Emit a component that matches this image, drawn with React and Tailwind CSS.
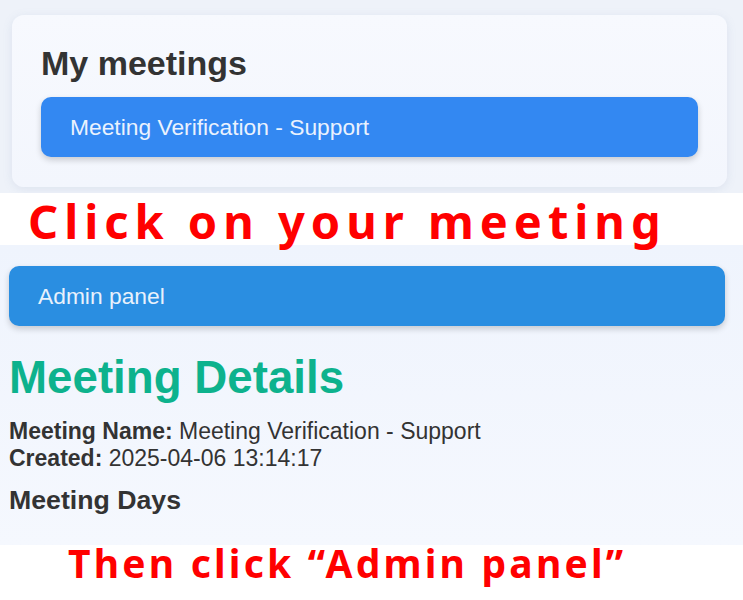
export default function App() {
  return (
    <div
      className="w-[743px] h-[600px] overflow-hidden bg-white text-[#333]"
      style={{ fontFamily: '"Liberation Sans", Arial, sans-serif' }}
    >
      {/* My meetings */}
      <div className="h-[193px] bg-[#eef2f9] pt-[15px] px-[12px] pr-[16px]">
        <div className="rounded-[12px] bg-gradient-to-b from-[#f7f9fe] to-[#f3f6fd] shadow-[0_2px_10px_rgba(120,140,180,0.15)] px-[29px] pt-[28px] pb-[30px]">
          <h2 className="text-[34px] leading-[40px] font-bold text-[#333]">My meetings</h2>
          <button className="mt-[14px] w-full h-[60px] rounded-[10px] bg-[#3388f2] text-left px-[29px] text-[22.8px] text-[#eaf2fe] shadow-[0_3px_6px_rgba(0,0,0,0.18)]">
            Meeting Verification - Support
          </button>
        </div>
      </div>

      {/* hint 1 */}
      <div className="h-[52px] bg-white pl-[28px] overflow-visible">
        <div
          className="text-[47px] leading-[56px] font-bold text-[#ff0000] tracking-[6px] whitespace-nowrap"
          style={{ fontFamily: '"Noto Sans", "Open Sans", sans-serif' }}
        >
          Click on your meeting
        </div>
      </div>

      {/* Meeting details */}
      <div className="h-[300px] bg-gradient-to-b from-[#eff4fd] to-[#f5f8fe] pt-[21px] pl-[9px] pr-[18px]">
        <button className="w-full h-[60px] rounded-[10px] bg-[#2a8ee1] text-left px-[29px] text-[22.8px] text-[#e8f1fc] shadow-[0_3px_6px_rgba(0,0,0,0.18)]">
          Admin panel
        </button>
        <h1 className="mt-[25px] text-[45.7px] leading-[54px] font-bold text-[#0db28d]">Meeting Details</h1>
        <div className="mt-[13px] text-[23px] leading-[27px] text-[#333]">
          <p>
            <b>Meeting Name:</b> Meeting Verification - Support
          </p>
          <p>
            <b>Created:</b> 2025-04-06 13:14:17
          </p>
        </div>
        <h3 className="mt-[13px] text-[26.7px] leading-[31.4px] font-bold text-[#333]">Meeting Days</h3>
      </div>

      {/* hint 2 */}
      <div className="h-[55px] bg-white pl-[68px]">
        <div
          className="text-[39px] leading-[36px] font-bold text-[#ff0000] tracking-[3.2px] whitespace-nowrap"
          style={{ fontFamily: '"Noto Sans", "Open Sans", sans-serif' }}
        >
          Then click “Admin panel”
        </div>
      </div>
    </div>
  );
}
